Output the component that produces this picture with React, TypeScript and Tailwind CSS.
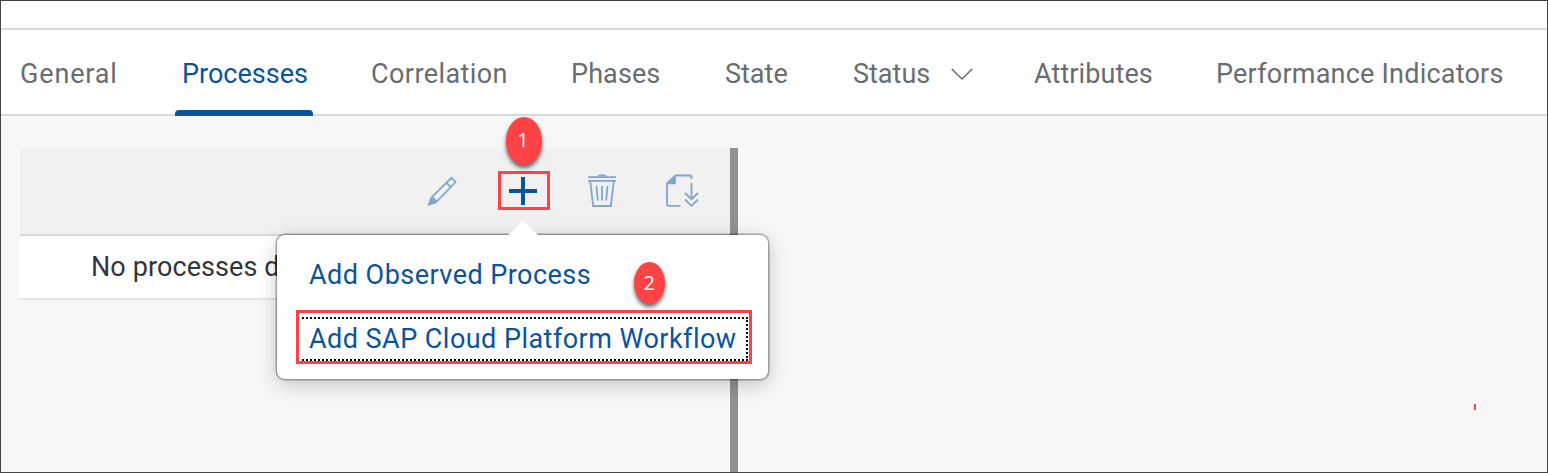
import React from "react";

const RED = "border-[#fd4345]";

function Tab({ label, className, active, children }: { label: string; className: string; active?: boolean; children?: React.ReactNode }) {
  return (
    <div className={`relative flex h-full shrink-0 items-center whitespace-nowrap text-[27px] ${active ? "text-[#0854a0]" : "text-[#6a6d70]"} ${className}`}>
      <span>{label}</span>
      {children}
      {active && <span className="absolute -bottom-0.5 -left-[7px] h-1.5 w-[138px] rounded-t bg-[#0854a0]" />}
    </div>
  );
}

function Pencil() {
  return (
    <svg width="30" height="30" viewBox="0 0 30 30" fill="none" stroke="#7fa6cf" strokeWidth="1.7">
      <path d="M1.6 28 4.2 20.8 23.4 1.8 27.6 6 8.8 25.6Z M18.4 6.8 22.8 11.2 M4.2 20.8 8.8 25.6" />
      <path d="M.8 28.6 3 22.2 7.4 26.5Z" fill="#7fa6cf" />
    </svg>
  );
}

function Trash() {
  return (
    <svg width="30" height="34" viewBox="0 0 30 34" fill="none" stroke="#7fa6cf" strokeWidth="1.8">
      <path d="M1 3.1H29M1 6.9H29M3.2 7 6.2 32H23.8L26.8 7M9.5 12 10.8 26.5M15 12V26.5M20.5 12 19.2 26.5" />
      <path d="M10 2.5Q11 .5 13 .5H17Q19 .5 20 2.5Z" fill="#7fa6cf" stroke="none" />
    </svg>
  );
}

function PageDown() {
  return (
    <svg width="34" height="34" viewBox="0 0 34 34" fill="none" stroke="#7fa6cf" strokeWidth="1.8">
      <path d="M15.5 31.8H4Q2 31.8 2 29.8V9.5L10.5 1.5H24.5Q26.5 1.5 26.5 3.5V5M26.5 9V25M20 19 26.5 25.3 33 19M20 25.5 26.5 31.8 33 25.5" />
      <path d="M1.5 10.2 10.8 1V10.2Z" fill="#7fa6cf" stroke="none" />
    </svg>
  );
}

export default function App() {
  return (
    <div className="relative flex h-[473px] w-[1548px] flex-col overflow-hidden border border-[#444446] bg-[#f7f7f7] font-[Roboto,sans-serif]">
      <div className="h-[29px] shrink-0 border-b-2 border-[#d9d9d9] bg-white" />
      <nav className="flex h-[86px] shrink-0 border-b-2 border-[#d9d9d9] bg-white pl-[19px] pt-1">
        <Tab label="General" className="w-[162px] tracking-[0.85px]" />
        <Tab label="Processes" className="w-[189px]" active />
        <Tab label="Correlation" className="w-[200px] tracking-[0.42px]" />
        <Tab label="Phases" className="w-[154px] tracking-[0.1px]" />
        <Tab label="State" className="w-32" />
        <Tab label="Status" className="w-[181px]">
          <svg className="absolute left-[98px] top-[34px]" width="22" height="13" viewBox="0 0 22 13" fill="none" stroke="#6a6d70" strokeWidth="1.6">
            <path d="M.8 1 11 11 21.2 1" />
          </svg>
        </Tab>
        <Tab label="Attributes" className="w-[182px] tracking-[0.1px]" />
        <Tab label="Performance Indicators" className="tracking-[0.22px]" />
      </nav>
      <main className="flex grow pl-[19px] pt-8">
        <section className="w-[710px]">
          <div className="flex h-[88px] items-center border-b-2 border-[#d9d9d9] bg-[#f1f1f1] pb-px pl-[408px]">
            <Pencil />
            <div className={`relative ml-10 flex h-[39px] w-[52px] items-center justify-center border-3 pr-[3px] ${RED}`}>
              <svg width="28" height="28" viewBox="0 0 28 28" stroke="#0854a0" strokeWidth="4">
                <path d="M0 14H28M14 0V28" />
              </svg>
              <span className="absolute -top-[57px] left-[5px] flex h-12 w-9 items-center justify-center rounded-[50%] bg-[#fd4345] pb-0.5 pr-0.5 font-['Open_Sans'] text-[20px] text-white shadow-[0_3px_4px_rgba(0,0,0,.6)]">1</span>
            </div>
            <div className="ml-[37px] pt-px"><Trash /></div>
            <div className="ml-12 pt-px"><PageDown /></div>
          </div>
          <div className="flex h-16 items-center border-b-2 border-[#e5e5e5] bg-white pl-[71px] text-[27px] text-[#32363a]">
            <span className="tracking-[0.1px]">No processes d</span>
          </div>
        </section>
        <div className="w-2 bg-[#919191]" />
      </main>
      <div className="absolute left-[276px] top-[234px] h-36 w-[491px] rounded-lg bg-white pl-[19px] text-[27px] tracking-[0.46px] text-[#0854a0] shadow-[0_0_0_1.5px_rgba(0,0,0,.3),0_5px_20px_rgba(0,0,0,.22)]">
        <svg className="absolute -top-[14px] left-[230px]" width="32" height="15" viewBox="0 0 32 15">
          <path d="M0 15 16 0 32 15Z" fill="white" />
        </svg>
        <div className="flex h-[75px] items-center pl-[13px] pt-1.5">Add Observed Process</div>
        <div className={`h-[54px] w-[456px] border-3 pl-[3px] pr-px pt-1 ${RED}`}>
          <div className="flex h-full w-full items-center whitespace-nowrap border-2 border-l-0 border-dotted border-black pl-[7px]">Add SAP Cloud Platform Workflow</div>
        </div>
        <span className="absolute left-[357px] top-[27px] flex h-[42px] w-[31px] items-center justify-center rounded-[50%] bg-[#fd4345] font-['Open_Sans'] text-[20px] text-white shadow-[0_3px_4px_rgba(0,0,0,.6)]">2</span>
      </div>
      <span className="absolute left-[1473px] top-[403px] h-1.5 w-0.5 bg-[#fd4345]" />
    </div>
  );
}
